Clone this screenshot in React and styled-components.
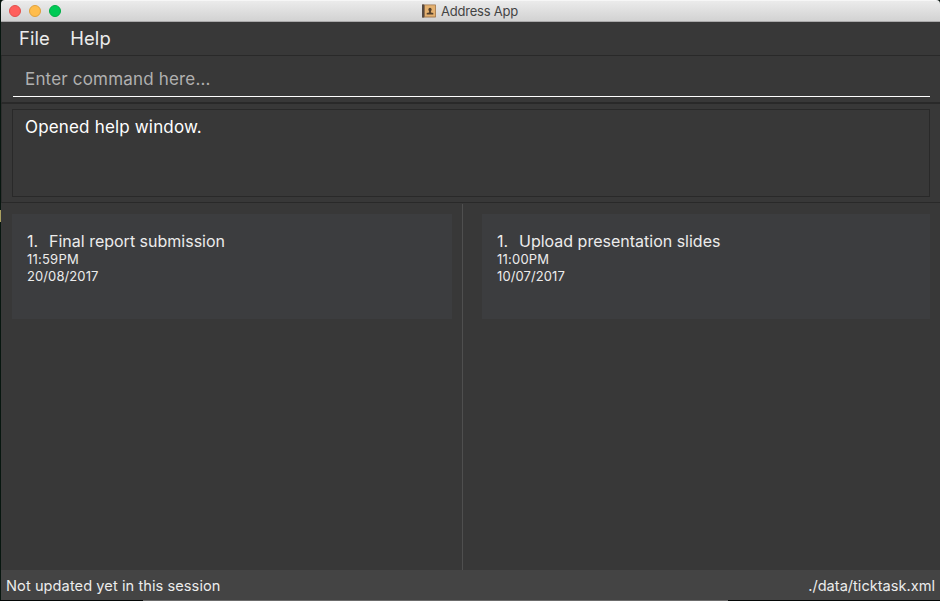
import React from "react";
import styled, { createGlobalStyle } from "styled-components";

const GlobalStyle = createGlobalStyle`
  * { box-sizing: border-box; }
  body { margin: 0; background: #07140f; font-family: Inter, Roboto, sans-serif; overflow: hidden; }
`;

const Desktop = styled.div`
  position: relative;
  width: 940px;
  height: 601px;
  padding: 0 0 1px 1px;
  background: linear-gradient(90deg, #050807 143px, #6b6b6b 143px 728px, #050807 728px) 0 600px / 940px 1px no-repeat, #07160f;
`;

const DesktopSliver = styled.div`
  position: absolute;
  left: 0;
  top: 210px;
  width: 1px;
  height: 12px;
  background: #aaa060;
`;

const Window = styled.div`
  display: flex;
  flex-direction: column;
  height: 600px;
  border-radius: 4px 4px 0 0;
  overflow: hidden;
  background: #383838;
`;

const TitleBar = styled.header`
  display: flex;
  align-items: center;
  flex: none;
  height: 22px;
  padding-left: 8px;
  background: linear-gradient(#ebebeb, #d2d2d2);
  border-top: 1px solid #f6f6f6;
  border-bottom: 1px solid #aaa9aa;
`;

const Controls = styled.div`
  display: flex;
  gap: 8px;
  width: 413px;
`;

const Light = styled.span`
  width: 12px;
  height: 12px;
  border-radius: 50%;
  background: ${(p) => p.$fill};
  border: 1px solid ${(p) => p.$edge};
`;

const Title = styled.h1`
  margin: 0 0 0 5px;
  font-size: 13px;
  font-weight: 400;
  line-height: 20px;
  letter-spacing: -0.22px;
  color: #444;
`;

const MenuBar = styled.nav`
  display: flex;
  gap: 20.4px;
  flex: none;
  height: 34px;
  padding-left: 18px;
  border-bottom: 1px solid #292929;
`;

const MenuItem = styled.span`
  font-size: 18.4px;
  line-height: 33px;
  letter-spacing: 0.1px;
  color: #ececec;
`;

const CommandPane = styled.div`
  flex: none;
  height: 48px;
  padding: 6px 10px 0 12px;
  border-left: 1px solid #2e2e2e;
  border-bottom: 2px solid #292929;
`;

const CommandField = styled.div`
  height: 35px;
  margin-left: -1px;
  padding-left: 12px;
  border-bottom: 1px solid #fff;
  font-size: 17px;
  line-height: 34px;
  letter-spacing: 0.18px;
  color: #b0b0b0;
`;

const ResultPane = styled.div`
  flex: none;
  height: 99px;
  padding: 5px 10px;
  border-left: 1px solid #2e2e2e;
  border-bottom: 1px solid #292929;
`;

const ResultBox = styled.div`
  height: 88px;
  padding-left: 12px;
  border: 1px solid #292929;
  font-size: 17px;
  line-height: 35px;
  letter-spacing: 0.17px;
  color: #fff;
`;

const Lists = styled.main`
  display: grid;
  grid-template-columns: 461px 1px 1fr;
  flex: 1;
`;

const List = styled.section`
  padding: ${(p) => p.$pad};
`;

const Divider = styled.div`
  margin-top: 1px;
  background: #4f4f4f;
`;

const Card = styled.article`
  height: 105px;
  padding: 18px 15px 0;
  background: #3c3d3f;
  color: #ececec;
`;

const CardTitle = styled.h2`
  display: flex;
  margin: 0;
  font-size: 16px;
  font-weight: 400;
  line-height: 19px;
`;

const Index = styled.span`
  width: 22px;
`;

const Detail = styled.p`
  margin: 0;
  font-size: 13px;
  line-height: 17px;
  letter-spacing: ${(p) => p.$track};
`;

const StatusBar = styled.footer`
  display: flex;
  justify-content: space-between;
  flex: none;
  height: 30px;
  padding: 0 5px;
  background: #444;
  font-size: 14.6px;
  line-height: 32px;
  color: #ececec;
`;

const StatusText = styled.span`
  letter-spacing: ${(p) => p.$track || "0"};
`;

function AddressBookIcon() {
  return (
    <svg width="14" height="14" viewBox="0 0 14 14">
      <rect x="0" y="0.5" width="14" height="13" rx="0.7" fill="#a07850" />
      <rect x="0" y="0.5" width="2.2" height="13" fill="#554a43" />
      <rect x="3" y="1.3" width="10.2" height="11.2" fill="#e4b170" />
      <ellipse cx="8" cy="5.6" rx="1.6" ry="1.9" fill="#55412c" />
      <path d="M7.1 7h1.8v1.4l2.4.5v1.5H4.7V8.9l2.4-.5z" fill="#55412c" />
    </svg>
  );
}

function TaskCard({ name, time, date }) {
  return (
    <Card>
      <CardTitle><Index>1.</Index><span>{name}</span></CardTitle>
      <Detail $track="0.22px">{time}</Detail>
      <Detail $track="0.1px">{date}</Detail>
    </Card>
  );
}

export default function App() {
  return (
    <Desktop>
      <GlobalStyle />
      <DesktopSliver />
      <Window>
        <TitleBar>
          <Controls>
            <Light $fill="#ff5f5c" $edge="#e2504c" />
            <Light $fill="#ffbd4c" $edge="#e0a13c" />
            <Light $fill="#00ca56" $edge="#00ae45" />
          </Controls>
          <AddressBookIcon />
          <Title>Address App</Title>
        </TitleBar>
        <MenuBar>
          <MenuItem>File</MenuItem>
          <MenuItem>Help</MenuItem>
        </MenuBar>
        <CommandPane>
          <CommandField>Enter command here...</CommandField>
        </CommandPane>
        <ResultPane>
          <ResultBox>Opened help window.</ResultBox>
        </ResultPane>
        <Lists>
          <List $pad="11px 10px 0 11px">
            <TaskCard name="Final report submission" time="11:59PM" date="20/08/2017" />
          </List>
          <Divider />
          <List $pad="11px 10px 0 19px">
            <TaskCard name="Upload presentation slides" time="11:00PM" date="10/07/2017" />
          </List>
        </Lists>
        <StatusBar>
          <StatusText $track="0.07px">Not updated yet in this session</StatusText>
          <StatusText>./data/ticktask.xml</StatusText>
        </StatusBar>
      </Window>
    </Desktop>
  );
}
